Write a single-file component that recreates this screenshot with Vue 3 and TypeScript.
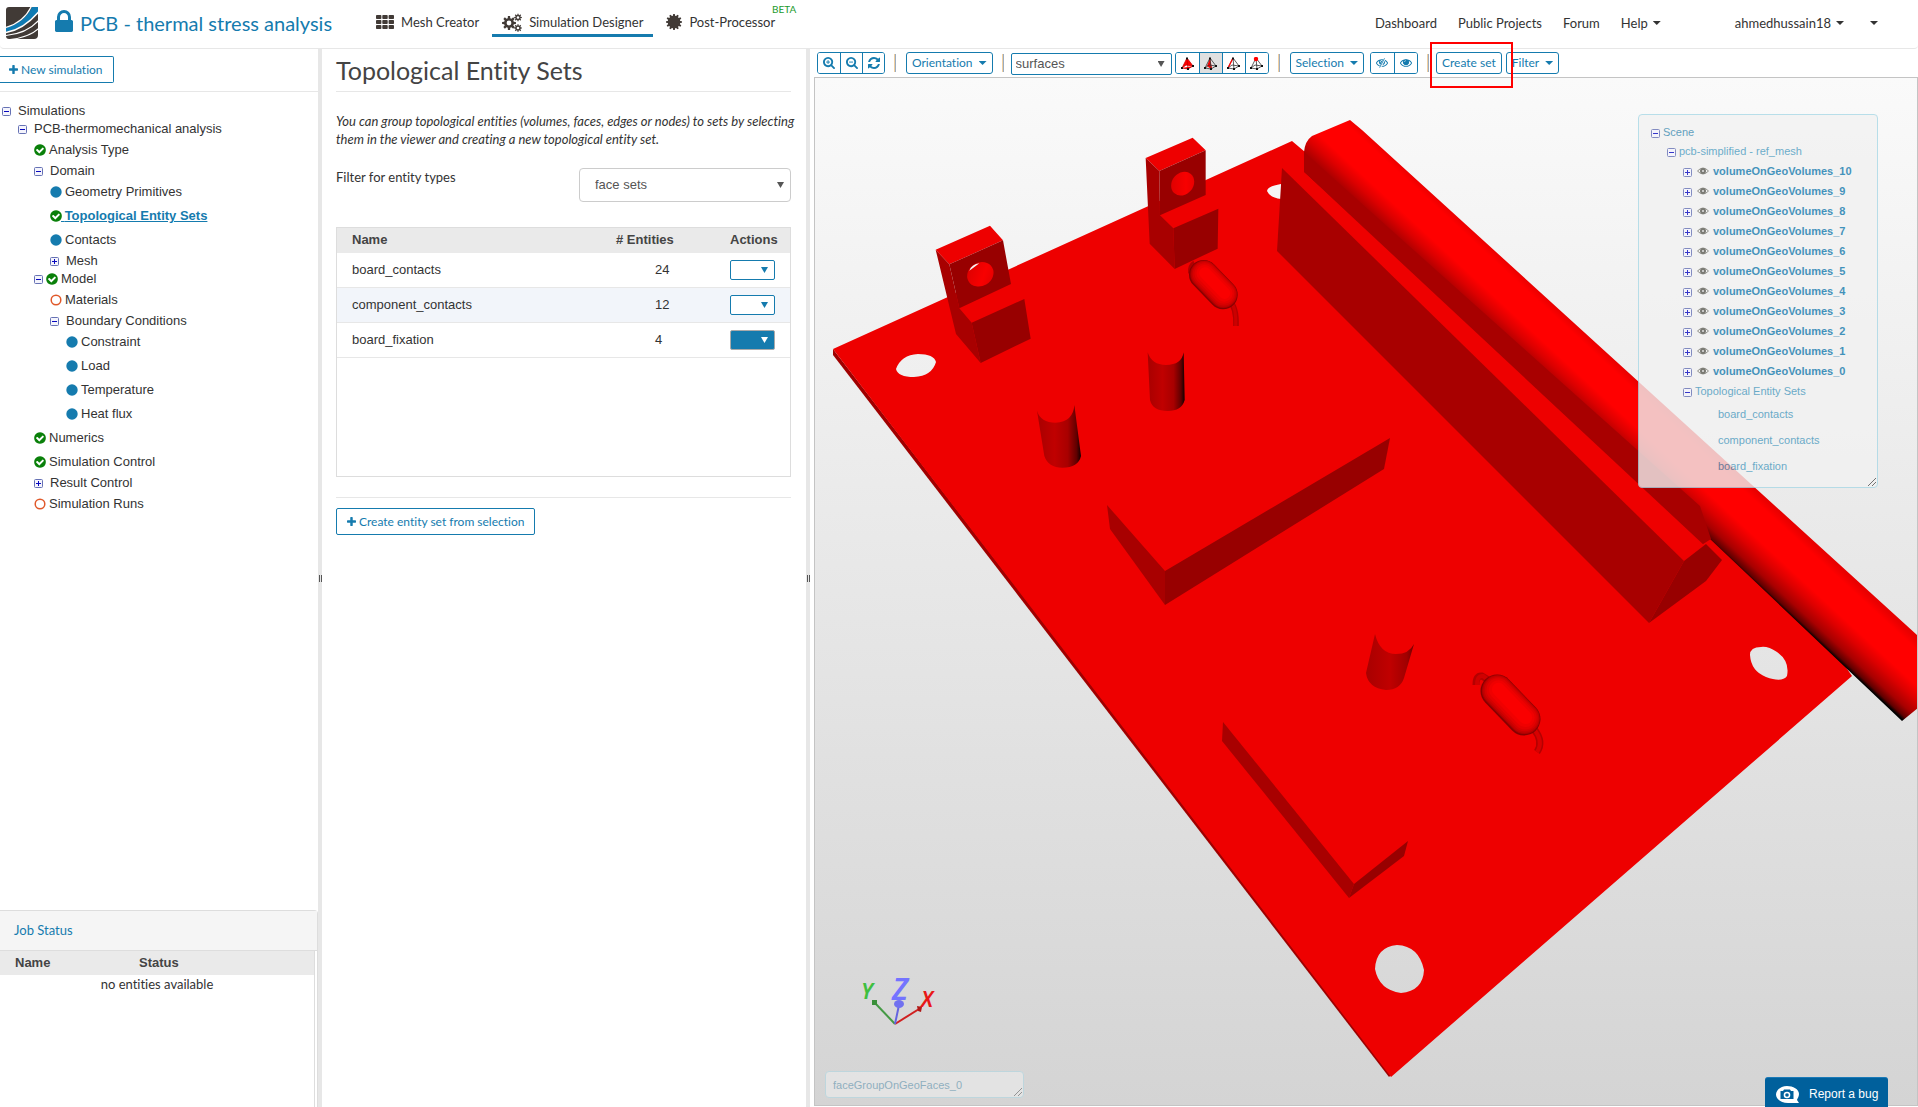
<script setup lang="ts">
import { ref } from 'vue'

type Status = 'ok' | 'todo' | 'open'
interface TreeRow {
  label: string
  level: number
  toggle?: 'plus' | 'minus'
  status?: Status
  active?: boolean
}

const tree: TreeRow[] = [
  { label: 'Simulations', level: 0, toggle: 'minus' },
  { label: 'PCB-thermomechanical analysis', level: 1, toggle: 'minus' },
  { label: 'Analysis Type', level: 2, status: 'ok' },
  { label: 'Domain', level: 2, toggle: 'minus' },
  { label: 'Geometry Primitives', level: 3, status: 'todo' },
  { label: 'Topological Entity Sets', level: 3, status: 'ok', active: true },
  { label: 'Contacts', level: 3, status: 'todo' },
  { label: 'Mesh', level: 3, toggle: 'plus' },
  { label: 'Model', level: 2, toggle: 'minus', status: 'ok' },
  { label: 'Materials', level: 3, status: 'open' },
  { label: 'Boundary Conditions', level: 3, toggle: 'minus' },
  { label: 'Constraint', level: 4, status: 'todo' },
  { label: 'Load', level: 4, status: 'todo' },
  { label: 'Temperature', level: 4, status: 'todo' },
  { label: 'Heat flux', level: 4, status: 'todo' },
  { label: 'Numerics', level: 2, status: 'ok' },
  { label: 'Simulation Control', level: 2, status: 'ok' },
  { label: 'Result Control', level: 2, toggle: 'plus' },
  { label: 'Simulation Runs', level: 2, status: 'open' },
]

const entitySets = [
  { name: 'board_contacts', count: 24, filled: false },
  { name: 'component_contacts', count: 12, filled: false },
  { name: 'board_fixation', count: 4, filled: true },
]

const volumes = [10, 9, 8, 7, 6, 5, 4, 3, 2, 1, 0].map((n) => `volumeOnGeoVolumes_${n}`)

const entityType = ref('face sets')
const renderMode = ref('surfaces')
const pickModes = ['Pick volumes', 'Pick faces', 'Pick edges', 'Pick nodes']

// Nested strokes that shade a rounded body from its dark rim to its highlight
const shades = [
  { color: '#860000', width: 1, shift: 0 },
  { color: '#b00000', width: 0.94, shift: 0.02 },
  { color: '#c60000', width: 0.88, shift: 0.03 },
  { color: '#d60000', width: 0.8, shift: 0.04 },
  { color: '#e40000', width: 0.7, shift: 0.05 },
  { color: '#f00000', width: 0.57, shift: 0.06 },
  { color: '#fa0000', width: 0.4, shift: 0.07 },
]

function gear(cx: number, cy: number, outer: number, inner: number, hole: number, teeth: number): string {
  const pts: string[] = []
  const step = (Math.PI * 2) / teeth
  for (let i = 0; i < teeth; i++) {
    const a = i * step
    const corners: [number, number][] = [[-0.32, inner], [-0.2, outer], [0.2, outer], [0.32, inner]]
    for (const [f, r] of corners) {
      pts.push(`${(cx + r * Math.cos(a + f * step)).toFixed(2)} ${(cy + r * Math.sin(a + f * step)).toFixed(2)}`)
    }
  }
  const ring = hole ? `M${cx - hole} ${cy}a${hole} ${hole} 0 1 0 ${hole * 2} 0a${hole} ${hole} 0 1 0 ${-hole * 2} 0Z` : ''
  return `M${pts.join('L')}Z${ring}`
}
const cogs = gear(7, 10, 7, 5, 2.4, 8) + gear(16, 4.5, 3.9, 2.7, 1.3, 8) + gear(16, 15, 3.9, 2.7, 1.3, 8)
const badge = gear(8, 8, 8, 6.3, 0, 12)

const icon = {
  check:
    'M1412 734q0-28-18-46l-91-90q-19-19-45-19t-45 19l-408 407-226-226q-19-19-45-19t-45 19l-91 90q-18 18-18 46 0 27 18 45l362 362q19 19 45 19 27 0 46-19l543-543q18-18 18-45zm252 162q0 209-103 385.500t-279.500 279.500-385.500 103-385.500-103-279.500-279.500-103-385.500 103-385.500 279.500-279.500 385.500-103 385.500 103 279.500 279.500 103 385.500z',
  lock: 'M640 768h512v-192q0-106-75-181t-181-75-181 75-75 181v192zm832 96v576q0 40-28 68t-68 28h-960q-40 0-68-28t-28-68v-576q0-40 28-68t68-28h32v-192q0-184 132-316t316-132 316 132 132 316v192h32q40 0 68 28t28 68z',
  plus: 'M1600 736v192q0 40-28 68t-68 28h-416v416q0 40-28 68t-68 28h-192q-40 0-68-28t-28-68v-416h-416q-40 0-68-28t-28-68v-192q0-40 28-68t68-28h416v-416q0-40 28-68t68-28h192q40 0 68 28t28 68v416h416q40 0 68 28t28 68z',
  eye: 'M1664 960q-152-236-381-353 61 104 61 225 0 185-131.500 316.500t-316.500 131.500-316.500-131.500-131.500-316.500q0-121 61-225-229 117-381 353 133 205 333.500 326.500t434.500 121.500 434.500-121.500 333.500-326.500zm-720-384q0-20-14-34t-34-14q-125 0-214.500 89.500t-89.500 214.500q0 20 14 34t34 14 34-14 14-34q0-86 61-147t147-61q20 0 34-14t14-34zm848 384q0 34-20 69-140 230-376.500 368.500t-499.500 138.500-499.500-139-376.500-368q-20-35-20-69t20-69q140-229 376.500-368t499.500-139 499.500 139 376.500 368q20 35 20 69z',
  refresh:
    'M1639 1056q0 5-1 7-64 268-268 434.500t-478 166.500q-146 0-282.500-55t-243.500-157l-129 129q-19 19-45 19t-45-19-19-45v-448q0-26 19-45t45-19h448q26 0 45 19t19 45-19 45l-137 137q71 66 161 102t187 36q134 0 250-65t186-179q11-17 53-117 8-23 30-23h192q13 0 22.500 9.500t9.500 22.500zm25-800v448q0 26-19 45t-45 19h-448q-26 0-45-19t-19-45 19-45l138-138q-148-137-349-137-134 0-250 65t-186 179q-11 17-53 117-8 23-30 23h-199q-13 0-22.500-9.500t-9.500-22.500v-7q65-268 270-434.500t480-166.500q146 0 284 55.500t245 156.500l130-129q19-19 45-19t45 19 19 45z',
  lens: 'M1216 832q0-185-131.500-316.500t-316.500-131.500-316.500 131.500-131.500 316.500 131.500 316.500 316.500 131.500 316.500-131.500 131.500-316.500zm512 832q0 53-37.500 90.500t-90.500 37.500q-54 0-90-38l-343-342q-179 124-399 124-143 0-273.500-55.500t-225-150-150-225-55.500-273.500 55.500-273.500 150-225 225-150 273.500-55.500 273.500 55.500 225 150 150 225 55.500 273.500q0 220-124 399l343 343q37 37 37 90z',
}
</script>

<template>
  <div class="app">
    <header class="topbar">
      <a href="#" class="logo" aria-label="Home">
        <svg width="32" height="32" viewBox="0 0 32 32">
          <defs><clipPath id="logo-clip"><path d="M3 0H32V28Q32 32 28 32H3Q0 32 0 29V3Q0 0 3 0Z" /></clipPath></defs>
          <g clip-path="url(#logo-clip)">
            <rect width="32" height="32" fill="#413a36" />
            <path d="M0 21C13 17 22 9 26 0H32V5C24 14 14 22 0 25Z" fill="#0f7bb3" />
            <path d="M0 20.500C13 16.500 21 9 25.500-1" stroke="#fff" stroke-width="1.200" fill="none" />
            <path d="M0 25.500C14 23 24 15 32.500 5" stroke="#fff" stroke-width="1.400" fill="none" />
            <path d="M0 28.500C15 27 26 21 33 13" stroke="#fff" stroke-width="1.200" fill="none" />
            <path d="M4 32.500C17 31 26 28 33 21" stroke="#fff" stroke-width="1.200" fill="none" />
          </g>
        </svg>
      </a>
      <svg class="lock" width="18" height="22" viewBox="320 128 1152 1408" preserveAspectRatio="none"><path :d="icon.lock" fill="currentColor" /></svg>
      <h1 class="project">PCB - thermal stress analysis</h1>
      <nav class="modes">
        <a href="#" class="mode">
          <svg width="18" height="14" viewBox="0 0 18 14">
            <template v-for="r in 3" :key="r">
              <rect v-for="c in 3" :key="c" :x="(c - 1) * 6.3" :y="(r - 1) * 5" width="5.400" height="4" rx=".8" fill="currentColor" />
            </template>
          </svg>
          <span>Mesh Creator</span>
        </a>
        <a href="#" class="mode current">
          <svg width="20" height="19" viewBox="0 0 20 19"><path :d="cogs" fill="currentColor" fill-rule="evenodd" /></svg>
          <span>Simulation Designer</span>
        </a>
        <a href="#" class="mode">
          <svg width="16" height="16" viewBox="0 0 16 16"><path :d="badge" fill="currentColor" /></svg>
          <span>Post-Processor</span>
          <sup class="beta">BETA</sup>
        </a>
      </nav>
      <nav class="links">
        <a href="#">Dashboard</a>
        <a href="#">Public Projects</a>
        <a href="#">Forum</a>
        <a href="#">Help<i class="caret" /></a>
        <a href="#" class="user">ahmedhussain18<i class="caret" /></a>
        <a href="#" aria-label="More"><i class="caret" /></a>
      </nav>
    </header>

    <main class="workspace">
      <aside class="sidebar">
        <div class="side-tools">
          <button type="button" class="btn edge">
            <svg class="plus" width="9" height="9" viewBox="192 128 1408 1408"><path :d="icon.plus" fill="currentColor" /></svg>
            New simulation
          </button>
        </div>
        <ul class="tree">
          <li
            v-for="row in tree"
            :key="row.label"
            :class="['node', 'l' + row.level, { leaf: !row.toggle, active: row.active }]"
          >
            <svg v-if="row.toggle" class="toggle" width="9" height="9" viewBox="0 0 9 9">
              <rect x=".5" y=".5" width="8" height="8" rx="1" fill="#f4f4fc" stroke="#6672b4" />
              <path :d="row.toggle === 'plus' ? 'M2 4.500H7M4.500 2V7' : 'M2 4.500H7'" stroke="#0808c0" />
            </svg>
            <svg v-if="row.status" class="status" width="12" height="12" viewBox="0 0 12 12">
              <template v-if="row.status === 'ok'">
                <path :d="icon.check" transform="translate(-.800 -.800) scale(.00760)" fill="#0a800a" />
              </template>
              <circle v-else-if="row.status === 'todo'" cx="6" cy="6" r="5.700" fill="#157bae" />
              <circle v-else cx="6" cy="6" r="4.800" fill="none" stroke="#e0592a" stroke-width="1.500" />
            </svg>
            <a href="#"><template v-if="row.active">&nbsp;</template>{{ row.label }}</a>
          </li>
        </ul>
        <section class="jobs">
          <h2>Job Status</h2>
          <div class="jobs-body">
            <table>
              <thead>
                <tr><th>Name</th><th>Status</th></tr>
              </thead>
              <tbody>
                <tr><td colspan="2">no entities available</td></tr>
              </tbody>
            </table>
          </div>
        </section>
      </aside>
      <div class="splitter"><i /></div>

      <section class="panel">
        <h2 class="panel-title">Topological Entity Sets</h2>
        <p class="hint">
          You can group topological entities (volumes, faces, edges or nodes) to sets by selecting<br />
          them in the viewer and creating a new topological entity set.
        </p>
        <div class="filter">
          <label for="entity-type">Filter for entity types</label>
          <span class="select big">
            <select id="entity-type" v-model="entityType">
              <option>face sets</option>
              <option>volume sets</option>
            </select>
          </span>
        </div>
        <div class="grid">
          <table>
            <thead>
              <tr><th class="c-name">Name</th><th class="c-count"># Entities</th><th class="c-act">Actions</th></tr>
            </thead>
            <tbody>
              <tr v-for="set in entitySets" :key="set.name">
                <td class="c-name">{{ set.name }}</td>
                <td class="c-count num">{{ set.count }}</td>
                <td class="c-act">
                  <span :class="['select', 'mini', { filled: set.filled }]">
                    <select :aria-label="'Actions for ' + set.name"><option></option></select>
                  </span>
                </td>
              </tr>
            </tbody>
          </table>
        </div>
        <hr />
        <button type="button" class="btn">
          <svg class="plus" width="9" height="9" viewBox="192 128 1408 1408"><path :d="icon.plus" fill="currentColor" /></svg>
          Create entity set from selection
        </button>
      </section>
      <div class="splitter"><i /></div>

      <section class="viewer">
        <div class="toolbar">
          <div class="group">
            <button type="button" aria-label="Zoom in">
              <svg width="12" height="12" viewBox="64 128 1664 1664"><path :d="icon.lens" fill="currentColor" /><path d="M768 560V1104M496 832H1040" stroke="currentColor" stroke-width="128" /></svg>
            </button>
            <button type="button" aria-label="Zoom out">
              <svg width="12" height="12" viewBox="64 128 1664 1664"><path :d="icon.lens" fill="currentColor" /><path d="M496 832H1040" stroke="currentColor" stroke-width="128" /></svg>
            </button>
            <button type="button" aria-label="Reset view">
              <svg width="12" height="12" viewBox="128 128 1536 1536"><path :d="icon.refresh" fill="currentColor" /></svg>
            </button>
          </div>
          <i class="sep" />
          <button type="button" class="tool">Orientation<i class="caret" /></button>
          <i class="sep" />
          <span class="select mode-select">
            <select v-model="renderMode" aria-label="Render mode">
              <option>surfaces</option>
              <option>wireframe</option>
            </select>
          </span>
          <div class="group picks">
            <button v-for="(mode, i) in pickModes" :key="mode" type="button" :class="{ pressed: i === 1 }" :aria-label="mode">
              <svg width="13" height="13" viewBox="0 0 13 13">
                <path v-if="i === 1" d="M6 1L3 9L7 12L8 11Z" fill="#f00" />
                <path d="M6 1L1 11L7 12L12 9ZM6 1L7 12M1 11L5 8L12 9" :stroke="i === 0 ? '#c00' : '#333'" stroke-width=".8" :fill="i === 0 ? '#f00' : 'none'" />
                <path v-if="i === 2" d="M6 1L1 11" stroke="#f00" stroke-width="1.300" />
                <path d="M5 .500H7V2.500H5ZM0 10H2V12H0ZM6 11H8V13H6ZM11 8H13V10H11Z" fill="#111" />
                <circle v-if="i === 3" cx="6" cy="2" r="2.200" fill="#f00" />
              </svg>
            </button>
          </div>
          <i class="sep" />
          <button type="button" class="tool">Selection<i class="caret" /></button>
          <div class="group wide">
            <button type="button" aria-label="Hide selection">
              <svg width="12" height="10" viewBox="0 256 1792 1408"><path :d="icon.eye" fill="currentColor" /><path d="M1330 260L600 1640" stroke="#fff" stroke-width="300" /><path d="M1270 260L540 1640" stroke="currentColor" stroke-width="130" /></svg>
            </button>
            <button type="button" aria-label="Show all">
              <svg width="12" height="10" viewBox="0 256 1792 1408"><path :d="icon.eye" fill="currentColor" /><circle cx="896" cy="832" r="400" fill="currentColor" /><path d="M660 800Q680 620 880 600" stroke="#fff" stroke-width="80" fill="none" /></svg>
            </button>
          </div>
          <i class="sep" />
          <span class="marked"><button type="button" class="tool">Create set</button></span>
          <button type="button" class="tool">Filter<i class="caret" /></button>
        </div>

        <div class="canvas">
          <svg class="scene" viewBox="815 78 1102 1027" preserveAspectRatio="xMinYMin slice">
            <defs>
              <linearGradient id="tube" gradientUnits="userSpaceOnUse" x1="1620" y1="365" x2="1573" y2="416">
                <stop offset="0" stop-color="#e80000" /><stop offset=".12" stop-color="#f00" /><stop offset=".5" stop-color="#f00" />
                <stop offset=".66" stop-color="#dc0000" /><stop offset=".84" stop-color="#a80000" /><stop offset=".95" stop-color="#600000" /><stop offset="1" stop-color="#000" />
              </linearGradient>
              <linearGradient id="pin">
                <stop offset="0" stop-color="#a80000" /><stop offset=".4" stop-color="#c00000" /><stop offset=".7" stop-color="#a80000" />
                <stop offset=".9" stop-color="#600000" /><stop offset="1" stop-color="#100000" />
              </linearGradient>
              <linearGradient id="pin-soft">
                <stop offset="0" stop-color="#a80000" /><stop offset=".5" stop-color="#c00000" /><stop offset=".85" stop-color="#a00000" /><stop offset="1" stop-color="#700000" />
              </linearGradient>
              <linearGradient id="bore" x1="0" y1="0" x2="1" y2="1">
                <stop offset="0" stop-color="#d80000" /><stop offset=".6" stop-color="#f80000" /><stop offset="1" stop-color="#e00000" />
              </linearGradient>
            </defs>

            <path d="M833 349V355L1389 1077L1392 1074Z" fill="#a00000" />
            <path
              fill="#ee0000"
              fill-rule="evenodd"
              d="M833 349L1292 141L1305 152L1800 600L1852 676L1391 1077ZM896 369Q901 355 918 354Q934 354 936 362Q932 376 914 377Q898 377 896 369ZM1281 184Q1268 186 1267 191Q1270 198 1281 199ZM1761 647Q1750 647 1750 655Q1751 671 1766 677Q1782 683 1787 676Q1790 661 1777 652Q1768 646 1761 647ZM1397 945Q1376 947 1375 969Q1379 990 1401 993Q1423 991 1424 970Q1419 946 1397 945Z"
            />

            <path d="M1304 172V152Q1305 141 1312 136L1350 120L1362 130L1918 636V708L1902 721L1709 538Z" fill="url(#tube)" />
            <path d="M1304 152V172L1697 548L1711 539L1700 506Z" fill="#a80000" />
            <path d="M1282 168L1304 172L1706 547L1684 561Z" fill="#ee0000" />
            <path d="M1304 172L1296 175V150L1304 152Z" fill="#ee0000" />
            <path d="M1282 168L1277 251L1649 623L1684 561Z" fill="#a80000" />
            <path d="M1684 561L1706 544L1722 560L1706 581L1649 623Z" fill="#980000" />

            <path d="M1107 505L1165 571V605L1110 529Z" fill="#a80000" />
            <path d="M1165 571L1390 438L1384 469L1165 605Z" fill="#980000" />
            <path d="M1223 722L1354 884L1349 898L1222 741Z" fill="#a80000" />
            <path d="M1354 884L1408 841L1404 856L1349 898Z" fill="#980000" />

            <g transform="translate(830 100) scale(.333333)">
              <path d="M317 449L480 377L519 421L358 493ZM388 625L543 552L583 597L425 668ZM947 174L1088 113L1127 151L988 213ZM990 346L1127 285L1165 326L1030 385Z" fill="#ee0000" />
              <path d="M317 449L358 493L388 625L425 668L452 789L378 702ZM947 174L988 213L990 346L1030 385L1034 507L959 431Z" fill="#a80000" />
              <path d="M358 493L519 421L543 552L388 625ZM425 668L583 597L602 716L452 789ZM988 213L1127 151V285L990 346ZM1030 385L1165 326L1163 446L1034 507Z" fill="#980000" />
              <ellipse cx="451" cy="523" rx="41" ry="35" transform="rotate(-30 451 523)" fill="url(#bore)" />
              <path d="M418 512Q426 492 448 490Z" fill="#f4f4f4" />
              <ellipse cx="1058" cy="251" rx="38" ry="32" transform="rotate(-50 1058 251)" fill="url(#bore)" />
              <path d="M621 932Q632 968 677 968Q730 965 733 915L753 1068Q745 1103 697 1103Q655 1103 643 1068Z" fill="url(#pin)" />
              <path d="M953 757Q965 795 1008 795Q1055 795 1061 757L1064 900Q1055 933 1013 933Q968 933 960 900Z" fill="url(#pin)" />
              <path d="M1198 602Q1220 622 1218 678" stroke="#b40000" stroke-width="17" fill="none" />
              <path d="M1199 602Q1220 622 1217 678" stroke="#cc0000" stroke-width="9" fill="none" />
              <path d="M1078 520Q1076 496 1092 486" stroke="#b00000" stroke-width="8" fill="none" />
              <path
                v-for="s in shades"
                :key="s.color"
                d="M1121 524L1179 584"
                :transform="`translate(${s.shift * 60} ${s.shift * -70})`"
                :stroke="s.color"
                :stroke-width="s.width * 88"
                stroke-linecap="round"
              />
            </g>

            <path d="M1375 634Q1380 654 1396 654Q1409 654 1414 644L1404 678Q1400 690 1386 690Q1368 688 1366 673Z" fill="url(#pin-soft)" />
            <path d="M1476 685Q1476 675 1482 676L1490 681" stroke="#b40000" stroke-width="7" fill="none" />
            <path d="M1477 685Q1477 675 1483 676L1490 681" stroke="#d00000" stroke-width="4" fill="none" />
            <path d="M1534 729Q1544 742 1537 752" stroke="#b40000" stroke-width="7" fill="none" />
            <path d="M1534 729Q1544 742 1537 752" stroke="#d80000" stroke-width="4" fill="none" />
            <path
              v-for="s in shades"
              :key="s.color"
              d="M1497 691L1524 719"
              :transform="`translate(${s.shift * 22} ${s.shift * -22})`"
              :stroke="s.color"
              :stroke-width="s.width * 33"
              stroke-linecap="round"
            />

            <g fill="none" stroke-width="2">
              <path d="M895 1024L875 1003" stroke="#459a45" />
              <path d="M895 1024L919 1009" stroke="#d02020" />
              <path d="M895 1024L899 1005" stroke="#6464e0" />
            </g>
            <rect x="872" y="1000" width="5" height="5" fill="#3a8f3a" />
            <path d="M917 1006L922 1007L921 1012L918 1011Z" fill="#b01818" />
            <ellipse cx="899" cy="1004" rx="5" ry="4" fill="#7070f0" />
            <g class="axes">
              <text x="861" y="999" font-size="22" fill="#3fbf3f">Y</text>
              <text x="892" y="1000" font-size="30" fill="#7474ff">Z</text>
              <text x="921" y="1007" font-size="21" fill="#e81818">X</text>
            </g>
          </svg>

          <div class="scene-tree">
            <ul>
              <li class="s0">
                <svg class="toggle" width="9" height="9" viewBox="0 0 9 9"><rect x=".5" y=".5" width="8" height="8" rx="1" fill="#f4f4fc" stroke="#6672b4" /><path d="M2 4.500H7" stroke="#0808c0" /></svg>Scene
              </li>
              <li class="s1">
                <svg class="toggle" width="9" height="9" viewBox="0 0 9 9"><rect x=".5" y=".5" width="8" height="8" rx="1" fill="#f4f4fc" stroke="#6672b4" /><path d="M2 4.500H7" stroke="#0808c0" /></svg>pcb-simplified - ref_mesh
              </li>
              <li v-for="v in volumes" :key="v" class="s2 vol">
                <svg class="toggle" width="9" height="9" viewBox="0 0 9 9"><rect x=".5" y=".5" width="8" height="8" rx="1" fill="#f4f4fc" stroke="#6672b4" /><path d="M2 4.500H7M4.500 2V7" stroke="#0808c0" /></svg>
                <svg class="eye" width="12" height="8" viewBox="0 0 12 8">
                  <path d="M.500 4Q6-2 11.500 4Q6 10 .500 4Z" fill="none" stroke="#77776f" />
                  <circle cx="6" cy="4" r="3" fill="#5c5c54" /><circle cx="6" cy="4" r="1" fill="#ddd" />
                </svg>
                {{ v }}
              </li>
              <li class="s2">
                <svg class="toggle" width="9" height="9" viewBox="0 0 9 9"><rect x=".5" y=".5" width="8" height="8" rx="1" fill="#f4f4fc" stroke="#6672b4" /><path d="M2 4.500H7" stroke="#0808c0" /></svg>Topological Entity Sets
              </li>
              <li v-for="set in entitySets" :key="set.name" class="s3">{{ set.name }}</li>
            </ul>
            <svg class="grip" width="8" height="8" viewBox="0 0 8 8"><path d="M0 8L8 0M4 8L8 4" stroke="#555" /></svg>
          </div>

          <div class="picked">
            faceGroupOnGeoFaces_0
            <svg class="grip" width="8" height="8" viewBox="0 0 8 8"><path d="M0 8L8 0M4 8L8 4" stroke="#555" /></svg>
          </div>
        </div>
      </section>
    </main>

    <button type="button" class="bug">
      <svg width="25" height="19" viewBox="0 0 25 19">
        <path d="M12 1C18 1 24 4 24 9C24 12 22 14 22 15L24 18H13C6 18 1 14 1 9.500S6 1 12 1Z" fill="#fff" />
        <path d="M5.500 6H8L9 4.500H15L16 6H18.500V14H5.500Z" fill="#00609c" />
        <circle cx="12" cy="10" r="3.300" fill="#fff" /><circle cx="12" cy="10" r="1.800" fill="#00609c" />
      </svg>
      Report a bug
    </button>
  </div>
</template>

<style>
body {
  background: #fff;
}
</style>

<style scoped>
.app {
  display: flex;
  flex-direction: column;
  height: 100vh;
  overflow: hidden;
  position: relative;
  font-family: Lato, sans-serif;
  font-size: 13px;
  line-height: 18px;
  font-variant-ligatures: none;
  color: #333;
}
.app * {
  box-sizing: border-box;
}
svg {
  flex: none;
  display: block;
}
a {
  color: inherit;
  text-decoration: none;
}
ul {
  list-style: none;
  margin: 0;
  padding: 0;
}
h1,
h2,
p {
  margin: 0;
  font-weight: 400;
}
button {
  font: inherit;
  color: #157bae;
  background: #fff;
  cursor: pointer;
}
.caret {
  display: inline-block;
  width: 8px;
  height: 4px;
  background: currentColor;
  clip-path: polygon(0 0, 100% 0, 50% 100%);
}

/* top bar */
.topbar {
  flex: none;
  display: flex;
  align-items: center;
  height: 49px;
  padding: 0 40px 10px 6px;
  border-bottom: 1px solid #e7e7e7;
  border-radius: 0 0 4px 4px;
}
.logo {
  margin: 8px 17px 0 0;
}
.lock {
  color: #157bae;
  margin: 4px 7px 0 0;
}
.project {
  font-size: 20px;
  line-height: 24px;
  color: #157bae;
  margin: 7px 34px 0 0;
}
.modes {
  display: flex;
  align-self: flex-start;
}
.mode {
  display: flex;
  align-items: center;
  height: 37px;
  gap: 7px;
  padding: 10px 10px 0;
  margin-right: 3px;
  border-bottom: 3px solid transparent;
  position: relative;
}
.mode svg {
  color: #413a36;
}
.mode.current {
  border-bottom-color: #157bae;
}
.beta {
  position: absolute;
  right: -11px;
  top: 3px;
  font-size: 10px;
  line-height: 12px;
  color: #1c9a2c;
}
.links {
  display: flex;
  gap: 21px;
  margin: 8px 0 0 auto;
}
.links a {
  display: flex;
  align-items: center;
  gap: 5px;
}
.links .user {
  margin-left: 53px;
  margin-right: 5px;
}

.workspace {
  flex: 1;
  display: flex;
  min-height: 0;
}
.splitter {
  flex: 0 0 4px;
  background: #e7e7e7;
  display: flex;
  align-items: center;
  justify-content: flex-end;
}
.splitter i {
  width: 3px;
  height: 7px;
  border: solid #555;
  border-width: 0 1px;
}

/* sidebar */
.sidebar {
  flex: 0 0 318px;
  display: flex;
  flex-direction: column;
}
.side-tools {
  height: 43px;
  padding-top: 7px;
  border-bottom: 1px solid #e7e7e7;
}
.btn {
  display: inline-flex;
  align-items: center;
  gap: 3px;
  height: 27px;
  padding: 0 10px;
  border: 1px solid #157bae;
  border-radius: 2px;
  font-size: 12px;
}
.btn.edge {
  border-left: 0;
  border-radius: 0 2px 2px 0;
  padding: 0 10px 0 9px;
}
.tree {
  padding-top: 10px;
  font: 13px/18px 'Liberation Sans', Arial, sans-serif;
}
.node {
  display: flex;
  align-items: center;
  height: 18px;
  padding-left: 2px;
}
.node.leaf {
  height: 24px;
}
.node.l1 {
  padding-left: 18px;
}
.node.l2 {
  padding-left: 34px;
}
.node.l3 {
  padding-left: 50px;
}
.node.l4 {
  padding-left: 66px;
}
.node .toggle {
  margin-right: 7px;
  margin-top: 1px;
}
.node .status {
  margin-right: 3px;
}
.node .toggle + .status {
  margin-left: -4px;
}
.node.active a {
  margin-left: -4px;
  font-weight: 700;
  color: #157bae;
  text-decoration: underline;
}
.jobs {
  margin-top: auto;
  height: 197px;
  border-top: 1px solid #ddd;
  border-right: 1px solid #ddd;
  border-radius: 0 4px 0 0;
  display: flex;
  flex-direction: column;
}
.jobs h2 {
  flex: none;
  height: 40px;
  padding-left: 14px;
  font-size: 13px;
  line-height: 38px;
  color: #157bae;
  background: #f5f5f5;
  border-bottom: 1px solid #ddd;
}
.jobs-body {
  flex: 1;
  margin-right: 2px;
  border-right: 1px solid #ddd;
}
.jobs table {
  width: 100%;
  border-collapse: collapse;
}
.jobs th {
  height: 24px;
  padding: 0 0 0 15px;
  background: #eaeaea;
  text-align: left;
  font: 700 13px/18px 'Liberation Sans', Arial, sans-serif;
  color: #444;
}
.jobs th:first-child {
  width: 124px;
}
.jobs td {
  text-align: center;
  padding: 0;
}

/* entity set panel */
.panel {
  flex: 0 0 484px;
  min-width: 0;
  padding: 0 15px 0 14px;
}
.panel-title {
  height: 43px;
  padding-top: 6px;
  font-size: 25px;
  line-height: 30px;
  color: #444;
  border-bottom: 1px solid #e7e7e7;
}
.hint {
  margin-top: 20px;
  font-size: 13px;
  font-style: italic;
  white-space: nowrap;
}
.filter {
  display: flex;
  justify-content: space-between;
  margin-top: 20px;
}
.select {
  position: relative;
  display: inline-block;
  color: #555;
}
.select::after {
  content: '';
  position: absolute;
  right: 7px;
  top: 50%;
  width: 7px;
  height: 6px;
  margin-top: -3px;
  background: currentColor;
  clip-path: polygon(0 0, 100% 0, 50% 100%);
  pointer-events: none;
}
.select select {
  appearance: none;
  display: block;
  width: 100%;
  height: 100%;
  margin: 0;
  color: inherit;
  background: #fff;
  border: 1px solid #157bae;
  border-radius: 2px;
  font: 13px/18px 'Liberation Sans', Arial, sans-serif;
}
.select.big {
  width: 212px;
  height: 34px;
}
.select.big select {
  padding: 0 15px;
  border-color: #ccc;
  border-radius: 4px;
}
.grid {
  min-height: 250px;
  margin-top: 25px;
  border: 1px solid #ddd;
}
.grid table {
  width: 100%;
  border-collapse: separate;
  border-spacing: 0;
  table-layout: fixed;
  font: 13px/18px 'Liberation Sans', Arial, sans-serif;
}
.grid th {
  height: 25px;
  background: #eaeaea;
  color: #444;
}
.grid th,
.grid td {
  text-align: left;
  padding: 0;
}
.grid thead th {
  padding-bottom: 2px;
}
.grid td {
  height: 35px;
  border-bottom: 1px solid #e7e7e7;
}
.grid tbody tr:nth-child(even) {
  background: #f2f5fa;
}
.grid .c-name {
  padding-left: 15px;
}
.grid .c-count {
  width: 114px;
}
.grid .num {
  padding-left: 39px;
}
.grid .c-act {
  width: 60px;
}
.select.mini {
  display: block;
  width: 45px;
  height: 20px;
  color: #157bae;
}
.select.mini.filled {
  color: #fff;
}
.select.mini.filled select {
  background: #157bae;
  border-color: #aaa;
}
hr {
  margin: 20px 0 10px;
  border: 0;
  border-top: 1px solid #e7e7e7;
}

/* viewer */
.viewer {
  flex: 1;
  min-width: 0;
  display: flex;
  flex-direction: column;
  padding: 0 0 1px 4px;
}
.toolbar {
  flex: none;
  display: flex;
  align-items: flex-start;
  height: 28px;
  padding: 3px 0 0 3px;
  font-size: 12px;
  position: relative;
  z-index: 1;
}
.group {
  display: flex;
  border: 1px solid #157bae;
  border-radius: 3px;
  overflow: hidden;
  height: 22px;
}
.group button {
  display: flex;
  align-items: center;
  justify-content: center;
  width: 22px;
  padding: 0;
  border: 0;
  border-left: 1px solid #157bae;
}
.group button:first-child {
  border-left: 0;
}
.picks button,
.wide button {
  width: 23px;
}
.group .pressed {
  background: #e0e0e0;
}
.sep {
  width: 2px;
  height: 18px;
  margin: 2px 10px 0 9px;
  background: linear-gradient(90deg, #f0cfa0 50%, #9bacc0 50%);
}
.tool {
  display: inline-flex;
  align-items: center;
  gap: 6px;
  height: 22px;
  padding: 0 5px;
  border: 1px solid #157bae;
  border-radius: 3px;
}
.mode-select {
  width: 161px;
  height: 22px;
  margin: 1px 3px 0 -3px;
}
.mode-select select {
  padding: 0 4px;
}
.wide {
  margin-left: 6px;
}
.marked {
  position: relative;
  margin: 0 4px 0 -3px;
}
.marked::after {
  content: '';
  position: absolute;
  inset: -10px -11px -14px -6px;
  border: 2px solid #f00;
  pointer-events: none;
}
.canvas {
  flex: 1;
  min-height: 0;
  position: relative;
  overflow: hidden;
  border: 1px solid #c4c4c4;
  background: linear-gradient(#fafafa, #d4d4d4);
}
.scene {
  width: 100%;
  height: 100%;
}
.axes {
  font-family: 'Noto Sans', 'Open Sans', sans-serif;
  font-weight: 600;
  font-style: italic;
}
.scene-tree {
  position: absolute;
  top: 36px;
  right: 39px;
  width: 240px;
  height: 374px;
  padding: 7px 12px;
  border: 1px solid #a8d8e6;
  border-radius: 4px;
  background: #f2f2f2;
  opacity: 0.8;
  font: 11px/20px 'Liberation Sans', Arial, sans-serif;
  color: #4a9abf;
}
.scene-tree li {
  display: flex;
  align-items: center;
  height: 20px;
  gap: 3px;
}
.scene-tree .toggle {
  margin-top: 3px;
}
.scene-tree .s0 {
  height: 19px;
  color: #3a8ab0;
}
.scene-tree .s1 {
  padding-left: 16px;
}
.scene-tree .s2 {
  padding-left: 32px;
}
.scene-tree .vol {
  gap: 4px;
  font-weight: 700;
  color: #157bae;
}
.scene-tree .eye {
  margin-left: 1px;
}
.scene-tree .s3 {
  height: 26px;
  padding-left: 67px;
}
.grip {
  position: absolute;
  right: 1px;
  bottom: 1px;
}
.picked {
  position: absolute;
  left: 10px;
  bottom: 7px;
  width: 199px;
  height: 27px;
  padding: 0 7px;
  border: 1px solid #a8d8e6;
  border-radius: 4px;
  background: #f2f2f2;
  opacity: 0.5;
  font: 11px/26px 'Liberation Sans', Arial, sans-serif;
  color: #4a8aaa;
}
.bug {
  position: absolute;
  right: 30px;
  bottom: 0;
  display: flex;
  align-items: center;
  gap: 9px;
  width: 123px;
  height: 30px;
  padding: 3px 0 0 10px;
  border: 0;
  border-top: 1px solid #1a7ab8;
  border-radius: 3px 3px 0 0;
  background: #00609c;
  color: #fff;
  font: 12px/18px 'Liberation Sans', Arial, sans-serif;
}
</style>
